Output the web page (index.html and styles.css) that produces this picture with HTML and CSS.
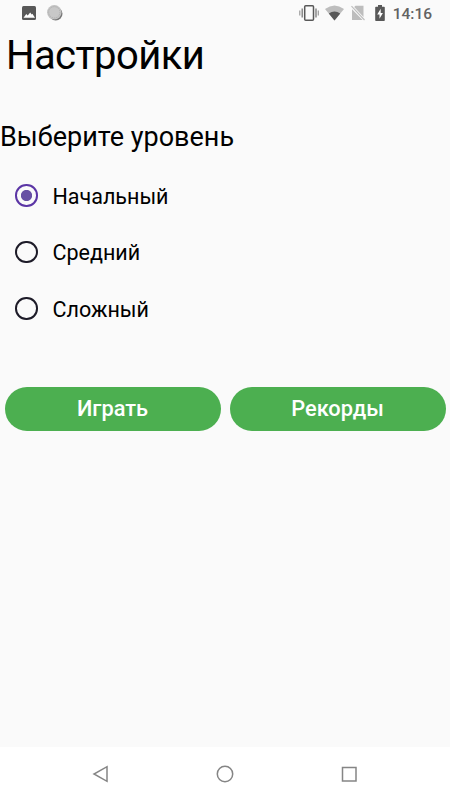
FILE: index.html
```
<!DOCTYPE html>
<html lang="ru">
<head>
  <meta charset="UTF-8" />
  <meta name="viewport" content="width=device-width, initial-scale=1" />
  <title>Настройки</title>
  <link rel="stylesheet" href="styles.css">
</head>
<body>
  <div class="status">
    <div class="status-left">
      <svg width="14" height="14" viewBox="0 0 14 14">
        <rect width="14" height="14" rx="1.5" fill="#585858" />
        <path d="M1.5 11.7 4.3 8l1.4 1.5L8.2 6.6l1.5 2 .7-.8 2.6 3.9z" fill="#fff" />
      </svg>
      <svg width="16" height="16" viewBox="0 0 16 16">
        <circle cx="8.7" cy="8.7" r="6.8" fill="#757575" />
        <circle cx="7.3" cy="7.3" r="7.2" fill="#c2c2c2" />
        <circle cx="7.3" cy="7.3" r="5.6" fill="#c8c8c8" stroke="#aaa" stroke-width=".8" stroke-dasharray="1 1" />
      </svg>
    </div>
    <div class="status-right">
      <!-- vibrate -->
      <svg class="vibrate" width="20" height="16" viewBox="0 0 20 16">
        <rect x="5.7" y=".8" width="8.8" height="14.4" rx="1" fill="none" stroke="#585858" stroke-width="1.5" />
        <path d="M3.2 3.5v9M17 3.5v9" stroke="#777" stroke-width="1.3" />
        <path d="M.8 5.5v5M19.3 5.5v5" stroke="#999" stroke-width="1.2" />
      </svg>
      <svg class="wifi" width="19" height="16" viewBox="0 0 19 16">
        <path d="M0 4Q9.5-3.2 19 4L9.5 15.500z" fill="#bdbdbd" />
        <path d="M3.8 8.6Q9.5 4.3 15.2 8.6L9.5 15.500z" fill="#585858" />
      </svg>
      <!-- no sim -->
      <svg class="sim" width="14" height="16" viewBox="0 0 14 16">
        <path d="M4.5 .7H12.5V12L3.200 2zM1 4.2 11.6 15H1z" fill="#bdbdbd" />
        <path d="M.5 1.2 13.5 15" stroke="#bdbdbd" stroke-width="1.1" />
      </svg>
      <svg class="battery" width="10" height="16" viewBox="0 0 10 16">
        <path d="M3 0h4v1.7h2q.8 0 .8.8v12.7q0 .8-.8.8H1q-.8 0-.8-.8V2.500q0-.8.8-.8h2z" fill="#585858" />
        <path d="M5.700 3.800 2.200 9.600h2.300v4.200L7.900 8H5.700z" fill="#fff" />
      </svg>
      <span class="clock">14:16</span>
    </div>
  </div>

  <main>
    <h1>Настройки</h1>
    <h2>Выберите уровень</h2>

    <form class="levels">
      <label class="level"><input type="radio" name="level" checked /><span>Начальный</span></label>
      <label class="level"><input type="radio" name="level" /><span>Средний</span></label>
      <label class="level"><input type="radio" name="level" /><span>Сложный</span></label>
    </form>

    <div class="buttons">
      <button class="btn">Играть</button>
      <button class="btn">Рекорды</button>
    </div>
  </main>

  <nav class="navbar">
    <svg width="18" height="18" viewBox="0 0 18 18">
      <path d="M15 1.700v14.600L2 9z" />
    </svg>
    <svg width="18" height="18" viewBox="0 0 18 18">
      <circle cx="9" cy="9" r="7.700" />
    </svg>
    <svg width="18" height="18" viewBox="0 0 18 18">
      <rect x="2.500" y="2.500" width="13.500" height="13.500" />
    </svg>
  </nav>
</body>
</html>
```
FILE: styles.css
```
* {
  box-sizing: border-box;
  margin: 0;
  padding: 0;
}
body {
  font-family: Roboto, "Liberation Sans", sans-serif;
  display: flex;
  flex-direction: column;
  height: 100vh;
  background: #fafafa;
  color: #000;
  overflow: hidden;
}
svg {
  display: block;
}
.status {
  display: flex;
  justify-content: space-between;
  align-items: center;
  height: 26px;
  padding: 0 18px 0 21.500px;
}
.status-left,
.status-right {
  display: flex;
  align-items: center;
}
.status-left {
  gap: 11px;
}
.wifi {
  margin-left: 6px;
}
.sim {
  margin-left: 7px;
}
.battery {
  margin-left: 10px;
}
.clock {
  margin-left: 8px;
  padding-top: 2px;
  font-size: 15.500px;
  font-weight: 500;
  line-height: 20px;
  color: #626262;
}
main {
  flex: 1;
}
h1 {
  margin: 6px 0 0 6px;
  font-size: 40px;
  font-weight: 400;
  line-height: 48px;
  letter-spacing: -0.6px;
}
h2 {
  margin-top: 41px;
  font-size: 27px;
  font-weight: 400;
  line-height: 32px;
}
.levels {
  margin-top: 14px;
}
.level {
  display: flex;
  align-items: center;
  gap: 15px;
  height: 56.5px;
  padding-left: 15px;
  font-size: 21.500px;
  line-height: 28px;
}
.level span {
  padding-top: 3px;
}
.level input {
  appearance: none;
  width: 22.500px;
  height: 22.500px;
  border: 2px solid #1d1b28;
  border-radius: 50%;
}
.level input:checked {
  border-color: #5b35a5;
  background: radial-gradient(circle, #6750a4 5.200px, transparent 6px);
}
.buttons {
  display: flex;
  gap: 9px;
  margin-top: 50px;
  padding: 0 4.500px;
}
.btn {
  flex: 1;
  height: 44px;
  border: none;
  border-radius: 22px;
  background: #4caf50;
  color: #fff;
  font-family: inherit;
  font-size: 21.800px;
  font-weight: 500;
}
.navbar {
  display: flex;
  justify-content: center;
  align-items: center;
  gap: 106px;
  height: 53px;
  background: #fff;
}
.navbar svg {
  fill: none;
  stroke: #858585;
  stroke-width: 1.500;
}
```
